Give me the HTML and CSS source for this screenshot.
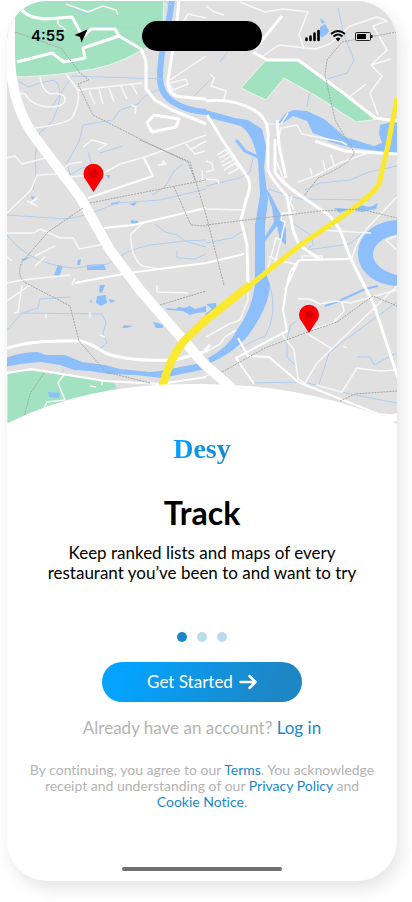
FILE: index.html
```html
<!DOCTYPE html>
<html lang="en">
<head>
<meta charset="utf-8">
<meta name="viewport" content="width=device-width, initial-scale=1">
<title>Desy – Track</title>
<link rel="stylesheet" href="styles.css">
</head>
<body>
<main class="phone">
  <header class="hero">
    <svg class="map" viewBox="7 1 390 424" preserveAspectRatio="xMidYMin slice" aria-hidden="true">
      <rect x="0" y="0" width="412" height="430" fill="#e0e0e1"/>
      <g class="park">
        <path d="M7 0H164L163 22Q156 48 138 52Q112 68 75 72Q45 77 7 77Z"/>
        <path d="M266 60L298 60L342 92L379 119L356 122L318 97L284 78L266 100L241 88Z"/>
        <path d="M7 372L30 370L113 382L118 392L118 430H7Z"/>
      </g>
      <g class="water">
        <path d="M0 360Q20 352 38 352L46 355L65 355L82 362L105 365L120 369L150 372L160 371L206 362V369L162 378L135 375L108 374L90 371L74 370L60 365L40 362L20 364L0 368Z"/>
        <path d="M206 110L235 118L248 120L262 129L266 146L264 168L268 200L265 225L265 270L270 285Q269 305 252 330Q238 351 210 363L208 358Q228 348 237 330Q252 310 255 285L255 225L260 195L258 160L254 145Q250 133 241 126L206 117Z"/>
        <path d="M268 124L279 122L285 114L293 110L307 111L324 119L335 128L345 137L374 146L382 143L379 134L380 125L391 122L400 121V153Q365 152 332 140L313 133L307 121L293 116L280 125Z"/>
        <path d="M265 187L270 194L280 213L286 229L286 245L280 240L277 226L268 237L264 243L263 240L274 222L272 208Z"/>
        <path d="M400 220C345 221 343 285 400 286V276C363 268 365 239 400 234Z"/>
        <path d="M334 208L354 209L360 205L370 207L378 203L376 209L362 212L348 209L340 213Z"/>
        <path d="M320 35L320 27L325 24L329 31L327 34L321 38ZM320 18L325 22L322 24Z"/>
        <path d="M106 175L110 175L109 179ZM31 196L35 197L32 200ZM111 203L120 201L118 204L111 205ZM129 204L137 202L134 206ZM131 220L138 221L138 224L131 223ZM58 265L63 266L59 277L54 275ZM78 260L81 259L80 265L77 265ZM87 265L104 264L106 270L87 270ZM21 259L31 257L23 261ZM100 285L105 285L102 293L99 292ZM97 296L106 295L107 303L101 306L96 303ZM109 299L116 301L110 303ZM90 300L92 301L91 304ZM124 325L133 326L127 328L122 328ZM153 322L158 323L163 325L163 328L156 328ZM165 308L176 309L179 307L184 308L190 306L195 309L206 306V312L196 313L190 315L183 311L168 310ZM48 392L60 393L59 398L49 397Z"/>
        <path d="M206 304L216 303L217 311L208 317L205 314L212 309Z"/>
      </g>
      <g class="river">
        <path d="M172 0L169 20Q160 55 160 77Q160 94 173 102Q187 111 206 112" stroke-width="6"/>
        <path d="M236 140L245 151L258 157" stroke-width="3"/>
        <path d="M328 140Q350 148 375 149L400 145M325 306L339 301L350 296L365 289L378 286" stroke-width="2"/>
      </g>
      <g class="brook">
        <path d="M15 79L28 87L40 83L54 80Q60 83 60 97Q58 110 53 120Q46 129 40 132L35 155L36 175L33 190M66 4L85 15L100 7M96 27L145 28M50 110L72 76L163 79M160 89L145 96L138 104L120 110L113 120L83 125L79 142L67 163L70 175L82 168L92 165L88 152M100 153L123 146M163 0L173 6"/>
        <path d="M7 215L67 219Q95 214 115 203L160 200L206 189M183 164L174 171L165 187L152 195M7 235Q30 265 75 268L108 264Q126 250 150 245L184 241L206 240M155 224L165 232L177 235L185 241L206 247M177 251V258L195 259L206 254M206 243L232 238L243 231M7 330L22 313L38 308L40 299L70 297M22 313L102 314L106 322L103 333L107 343L98 350M64 369L62 373L52 374M113 382L118 391"/>
        <path d="M194 96L213 77M220 62L245 28M266 80L293 60M338 8L344 35L354 60L347 73L324 80L309 95L307 107M206 186L240 178L250 172L253 158M305 190L320 183L350 180L369 172L397 166M268 189L300 199L370 200M291 222L312 236L313 245L306 250L350 244L371 225M270 285Q278 315 265 336Q255 340 240 348M296 321L290 326L287 340L287 357L295 365M319 384L329 353L341 343L397 302M250 383L304 382L350 394L397 403M357 357L370 357L374 365L396 353"/>
      </g>
      <g class="street">
        <path d="M58 18L58 24L66 30M66 4L88 12L103 6L116 10L118 15M40 77Q42 90 50 94Q62 92 65 98Q66 107 50 107Q32 106 25 94L10 92M66 74L78 90Q80 105 72 118Q65 124 35 128M78 90L142 83M89 91L95 104M99 89L103 104M109 88L114 102M121 86L127 99M132 85L137 94M131 105L136 107L135 114M170 80L206 56M169 84L173 90L188 84L186 79L170 83M83 147L92 140L107 144L98 150M206 18L188 14L181 26"/>
        <path d="M7 158L15 156L22 164L53 156M7 213L31 190L37 175L57 174L69 164L82 162M57 174L70 177L100 174M100 175L120 164L145 157L206 135M27 201L37 206L31 202L38 198M158 165L166 164L163 161L162 166M186 144L195 154L205 151M190 150L206 141M7 233H34L40 229L60 238H73L79 249L104 244M144 222L131 234Q130 256 142 266L158 269M55 246L35 256M45 257L35 266M7 257L12 261M7 283L22 280L70 275M72 285L75 278M157 285V292L188 293M202 170L203 182"/>
        <path d="M206 6L214 12L224 15M240 2L265 12L283 9L308 12L299 34L304 49M260 58L279 45L315 49L330 44L350 26L377 17L387 21L373 26L387 50L371 65L382 76L370 93L378 115M371 65L391 59M348 98L366 84M210 74L214 78L211 86L226 91L224 99M268 124L281 124L288 113M277 145L281 128L297 125L302 134L342 142L347 145M206 161L212 163L213 170L206 172M206 179L218 180L219 184M217 155L225 150L229 153L219 158M221 163L230 156L234 160L222 166M224 170L235 163L239 168L228 174"/>
        <path d="M276 160L286 185M206 209L243 210M292 195L290 202L294 210M282 213H296M282 213L281 220L285 222L281 240M276 238L281 240L273 270L268 268ZM269 257L278 260L298 265M302 256H322V260H302ZM319 230L371 233M298 182L315 176L340 163L370 152M312 175L310 168M325 170L323 160M334 165L331 155M397 236L386 240L397 250M397 197L374 221Q355 239 352 260"/>
        <path d="M30 285L7 301M22 285L18 312L14 313M65 373L58 383L65 400L47 402L43 410M90 386L96 387M102 380V385M46 314V318M90 312V318M100 335L105 337"/>
        <path d="M206 337L229 324L240 320L248 300V285M206 352L220 344L225 337L236 330M206 376L213 373M281 333L294 350L298 379L305 383L317 363L397 286M308 334L332 349M298 299H310L320 304L337 301L350 303L397 290M342 302L344 311L333 323L312 329M316 385L342 392L357 368L380 371L397 370M343 346L347 348"/>
      </g>
      <g class="road">
        <path d="M17 62L52 53L64 62L85 58L83 48L119 36L115 29H91L83 37L72 17L46 19Q28 18 22 10" stroke-width="3"/>
        <path d="M119 36L141 49Q147 60 146 70V89L155 100L172 110L206 124M147 123L154 115L179 119L176 127L152 132ZM179 0L176 30L168 80Q167 96 182 97L206 99" stroke-width="3"/>
        <path d="M206 101Q230 98 252 109Q270 118 268 139V170Q272 180 287 196L293 230L299 245L321 260M275 139V172Q280 182 304 198L330 216L340 230L350 257L364 285L374 305L398 378M223 141L236 160L248 178Q252 187 246 200L241 220L247 245L248 285M255 49L282 16M253 52L267 60H298L342 92L375 118L397 121M315 141L345 151L397 154M207 115L223 141M277 120L279 145L286 178" stroke-width="3"/>
        <path d="M144 158L153 176L88 198M104 228L133 225L206 208M75 283L128 273L206 263L244 254M299 260L290 272L286 290L283 310L287 331L236 358L254 384M300 260L350 259M285 290L299 260M238 338L248 356L269 357L296 380L298 382L378 414L397 416M7 373L32 369L105 381L160 384L206 377" stroke-width="2"/>
        <path d="M7 348Q30 341 60 341H80Q91 343 105 353Q130 362 175 360L204 352L210 345" stroke-width="3"/>
        <path d="M10 0V55Q11 103 34 136L80 197L110 250L140 290L204 364L232 388" stroke-width="10"/>
      </g>
      <g class="highway">
        <path d="M162 388Q168 362 183 342Q197 328 206 320L250 285" stroke-width="8"/>
        <path d="M248 287L299 246L340 218Q372 196 379 184L388 145L397 98" stroke-width="5"/>
      </g>
      <g class="border">
        <path d="M15 32L61 48L80 73L89 80L78 84L93 115L150 144L188 162L195 180M140 140L190 162L206 215L224 285M90 203L206 180M83 208L48 232L22 262Q15 278 28 284L70 306L79 341L106 372L150 383M174 187L191 225L206 226M206 225L320 211L360 209L397 218M397 32L342 42L327 60L325 75L335 120L354 152Q353 163 318 178L304 196M160 305L206 291M44 373L30 394L24 417M222 372L265 348L305 333L337 322L373 296L397 306M340 401L355 394L397 391"/>
      </g>
      <g class="pin">
        <path d="M93.500 192L86.500 181A10 10 0 1 1 100.500 181Z"/>
        <circle cx="93.500" cy="173.500" r="4"/>
        <path d="M309 333L302 322A10 10 0 1 1 316 322Z"/>
        <circle cx="309" cy="314.500" r="4"/>
      </g>
      <path d="M0 426L7 423.500Q85 384 190 384Q290 382 378 415L386 416L397 413V430H0Z" fill="#fff"/>
      <path d="M393 422L397 421V424Z" fill="#ddd"/>
    </svg>
    <div class="status">
      <div class="clock">
        <time>4:55</time>
        <svg width="14" height="14" viewBox="0 0 14 14" aria-hidden="true"><path d="M13.500 .5L7.500 13.500L6 8L.5 6Z"/></svg>
      </div>
      <div class="island"></div>
      <svg class="signals" width="68" height="14" viewBox="0 0 68 14" aria-hidden="true">
        <path d="M1.500 9.500V11M5.500 7.500V11M9.500 4.500V11M13.500 2V11" fill="none" stroke="#000" stroke-width="2.600" stroke-linecap="round"/>
        <g fill="none" stroke="#000" stroke-width="1.800"><path d="M26 5Q33 -1 40 5M28.500 7.500Q33 3.500 37.500 7.500"/></g>
        <path d="M30.500 9.500Q33 7.500 35.500 9.500L33 12.500Z"/>
        <rect x="50.500" y="3.500" width="15" height="8" rx="1" fill="#ddd" stroke="#222"/>
        <path d="M52 5H61V10H52ZM66 6H67.500V9H66Z"/>
      </svg>
    </div>
  </header>
  <section class="intro">
    <p class="brand">Desy</p>
    <h1>Track</h1>
    <p class="lead">Keep ranked lists and maps of every<br>restaurant you’ve been to and want to try</p>
    <div class="dots"><span class="dot current"></span><span class="dot"></span><span class="dot"></span></div>
    <button class="start" type="button">Get Started
      <svg width="18" height="16" viewBox="0 0 18 16" aria-hidden="true"><path d="M1.500 8H16M10.500 2L16.500 8L10.500 14" fill="none" stroke="#fff" stroke-width="2.500" stroke-linecap="round" stroke-linejoin="round"/></svg>
    </button>
    <p class="login">Already have an account? <a href="#login">Log in</a></p>
    <p class="legal">By continuing, you agree to our <a href="#terms">Terms</a>. You acknowledge receipt and understanding of our <a href="#privacy">Privacy Policy</a> and <a href="#cookies">Cookie Notice</a>.</p>
  </section>
  <div class="home"></div>
</main>
</body>
</html>
```
FILE: styles.css
```css
* { box-sizing: border-box; }
body {
  margin: 0;
  padding: 1px 15px 21px 7px;
  background: #fff;
  font-family: Lato, sans-serif;
  font-variant-ligatures: none;
  color: #000;
}
p, h1 { margin: 0; }
a { color: #1b87c9; text-decoration: none; }
.phone {
  display: flex;
  flex-direction: column;
  min-height: calc(100vh - 22px);
  border-radius: 40px;
  overflow: hidden;
  background: #fff;
  box-shadow: 4px 8px 16px rgba(0, 0, 0, .1);
}
.hero { position: relative; }
.map { display: block; width: 100%; }
.park { fill: #a3e2c1; stroke: #e9f5ed; stroke-width: 1; }
.water { fill: #8dbffc; }
.river { fill: none; stroke: #8dbffc; }
.brook { fill: none; stroke: #b0cdee; stroke-width: 1; }
.street { fill: none; stroke: #f8f8f8; stroke-width: 1.5; stroke-linejoin: round; }
.road { fill: none; stroke: #fff; stroke-linejoin: round; }
.highway { fill: none; stroke: #fae92f; }
.border { fill: none; stroke: #a4a4a4; stroke-width: 1; stroke-dasharray: 2 1; }
.pin path { fill: #f90004; }
.pin circle { fill: #d60003; }
.status {
  position: absolute;
  top: 20px;
  left: 0;
  right: 0;
  display: grid;
  grid-template-columns: 1fr 120px 1fr;
  align-items: center;
  padding: 0 24px;
}
.clock {
  display: flex;
  align-items: center;
  gap: 9px;
  font: 600 15px/20px Inter, sans-serif;
}
.island { height: 30px; border-radius: 15px; background: #000; }
.signals { justify-self: end; }
.intro {
  display: flex;
  flex-direction: column;
  align-items: center;
  padding: 8px 20px 0;
  text-align: center;
}
.brand {
  font: bold 28px/32px "Liberation Serif", serif;
  background: linear-gradient(110deg, #03a3ff, #1d86c5);
  background-clip: text;
  -webkit-background-clip: text;
  color: transparent;
}
h1 { margin-top: 28px; font-size: 32px; line-height: 40px; font-weight: 700; }
.lead { margin-top: 10px; font-size: 17px; line-height: 20px; }
.dots { display: flex; gap: 10px; margin-top: 49px; }
.dot { width: 10px; height: 10px; border-radius: 50%; background: #bbdbee; }
.dot.current { background: #1b87c9; }
.start {
  display: flex;
  align-items: center;
  justify-content: center;
  gap: 6px;
  width: 200px;
  height: 40px;
  margin-top: 20px;
  padding: 0;
  border: 0;
  border-radius: 20px;
  background: linear-gradient(110deg, #03a3ff 12%, #1d86c5 86%);
  color: #fff;
  font: 17px/20px Lato, sans-serif;
}
.login { margin-top: 16px; font-size: 17px; line-height: 20px; color: #b3b3b3; }
.legal { margin-top: 24px; font-size: 14px; line-height: 16px; color: #b3b3b3; }
.home {
  width: 160px;
  height: 4px;
  margin: auto auto 10px;
  border-radius: 2px;
  background: #707070;
}
```
